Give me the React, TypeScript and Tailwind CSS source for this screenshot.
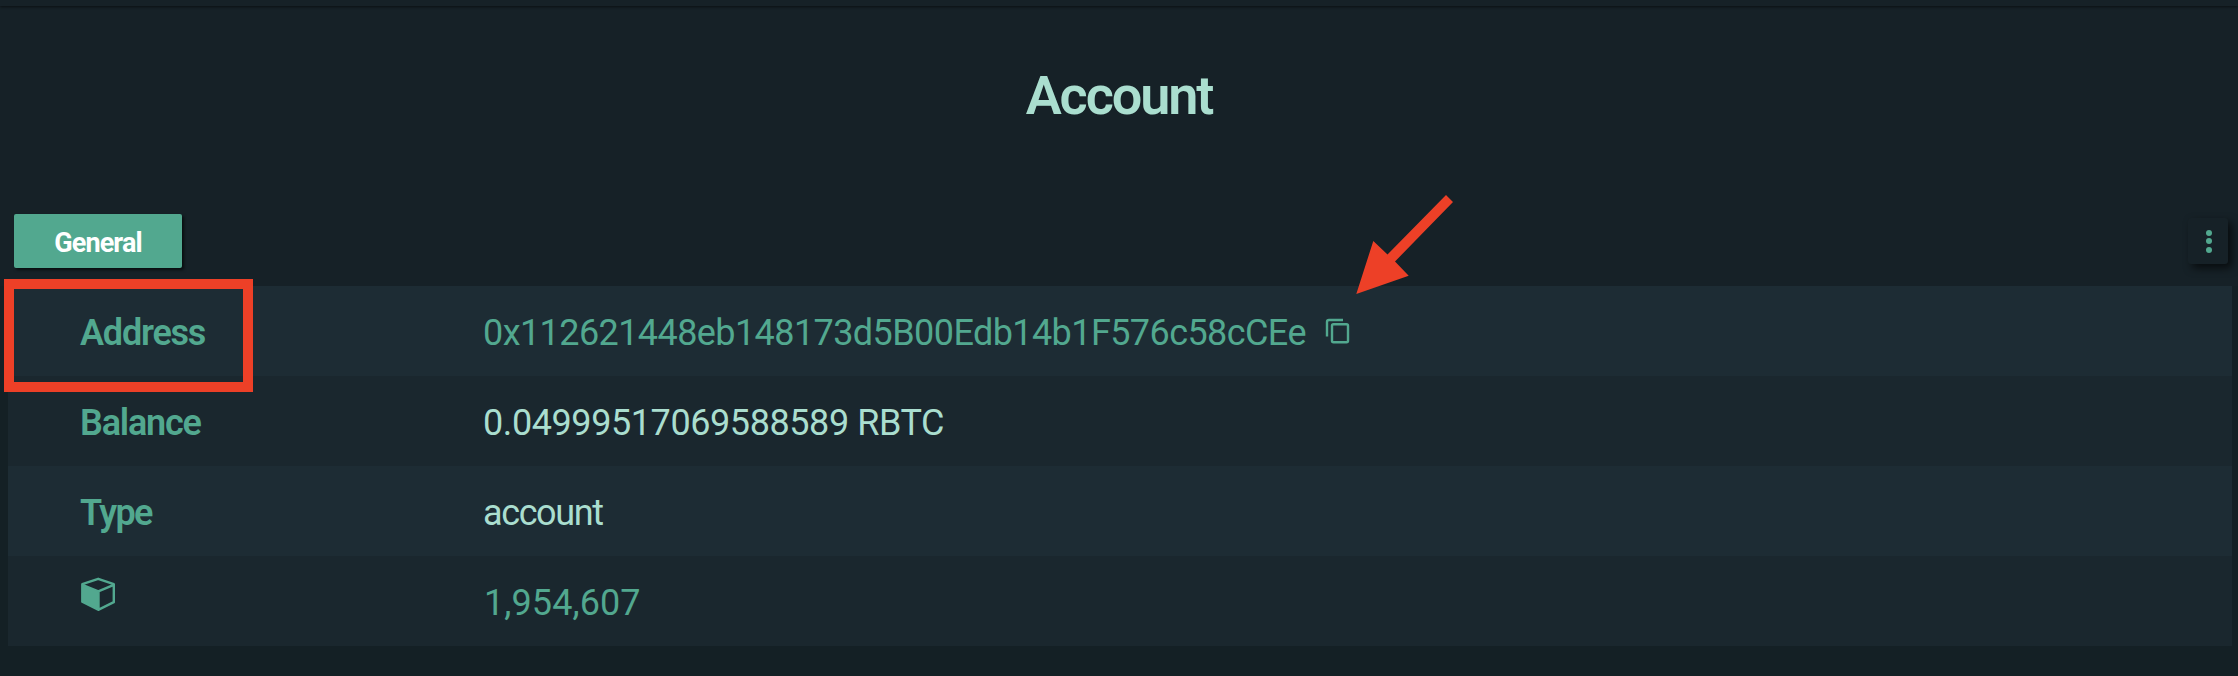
import type { ReactNode } from "react";

function Row({ label, striped, children }: { label: ReactNode; striped?: boolean; children: ReactNode }) {
  return (
    <div className={`flex h-[90px] pl-[72px] ${striped ? "bg-[#1d2c34]" : "bg-[#1a272e]"}`}>
      <div className="w-[403px] shrink-0 pt-[26px] text-[36px] leading-[42px] font-semibold text-[#52a88f]">{label}</div>
      <div className="flex pt-[26px] text-[36px] leading-[42px] whitespace-nowrap">{children}</div>
    </div>
  );
}

function CubeIcon() {
  return (
    <svg className="mt-[-6px] block h-[36px] w-[36px]" viewBox="80 575 36 36">
      <path
        d="M82.3 583.2 98.2 577.8 113.8 583.2V601.2L98.2 608.8 82.3 600.8ZM82.3 583.8 98.3 590.4 113.8 583.8M98.5 590.4V608.8"
        fill="none"
        stroke="#52a88f"
        strokeWidth="2.4"
        strokeLinejoin="round"
      />
      <path d="M82 584 98.8 590.6V609L82 600.8Z" fill="#52a88f" />
    </svg>
  );
}

function CopyIcon() {
  return (
    <svg className="mt-[6px] block h-[26px] w-[26px]" viewBox="1325 318 26 26" fill="none" stroke="#52a88f" strokeWidth="2.4">
      <path d="M1343 320H1329Q1327 320 1327 322V336.5" />
      <rect x="1332" y="324.2" width="16" height="18" rx="1.5" />
    </svg>
  );
}

export default function App() {
  return (
    <div className="relative h-[676px] w-full overflow-hidden bg-[#162127] font-['Roboto',sans-serif]">
      <div className="h-[6px] shadow-[0_1px_3px_rgba(0,0,0,0.55)]" />
      <h1 className="h-[208px] pt-[59px] text-center text-[54px] leading-[62px] font-semibold tracking-[-2.1px] text-[#aadecf]">
        Account
      </h1>
      <div className="flex h-[72px] justify-between pr-[10px] pl-[14px]">
        <button className="flex h-[54px] w-[168px] items-center justify-center rounded-[2px] bg-[#52a88f] pt-[4px] text-[27px] leading-[32px] font-bold tracking-[-0.9px] text-white shadow-[2px_2px_3px_rgba(0,0,0,0.6)]">
          General
        </button>
        <button className="mt-[4px] flex h-[46px] w-[40px] flex-col items-center justify-center gap-[2.5px] rounded-[3px] bg-[#162127] pl-[2px] shadow-[4px_4px_8px_rgba(0,0,0,0.65)]">
          <span className="size-[6px] rounded-full bg-[#52a88f]" />
          <span className="size-[6px] rounded-full bg-[#52a88f]" />
          <span className="size-[6px] rounded-full bg-[#52a88f]" />
        </button>
      </div>
      <div className="h-[390px] bg-[#142025] pr-[6px] pl-[8px]">
        <Row striped label={<span className="tracking-[-1.2px]">Address</span>}>
          <span className="tracking-[-0.58px] text-[#52a88f]">0x112621448eb148173d5B00Edb14b1F576c58cCEe</span>
          <span className="ml-[19px]">
            <CopyIcon />
          </span>
        </Row>
        <Row label={<span className="tracking-[-1.2px]">Balance</span>}>
          <span className="tracking-[-0.42px] text-[#aadecf]">0.04999517069588589 RBTC</span>
        </Row>
        <Row striped label={<span className="tracking-[-1.6px]">Type</span>}>
          <span className="tracking-[-1.4px] text-[#aadecf]">account</span>
        </Row>
        <Row label={<CubeIcon />}>
          <span className="pl-px tracking-[0.1px] text-[#52a88f]">1,954,607</span>
        </Row>
      </div>
      <div className="absolute top-[279px] left-[4px] h-[113px] w-[249px] border-[10px] border-[#ed4027]" />
      <svg className="absolute top-[190px] left-[1350px] h-[110px] w-[110px]" viewBox="1350 190 110 110">
        <path d="M1356.3 294 1373.3 241 1387.5 254.5 1446 195 1453 202 1395 261.5 1408.7 275.7Z" fill="#ed4027" />
      </svg>
    </div>
  );
}
